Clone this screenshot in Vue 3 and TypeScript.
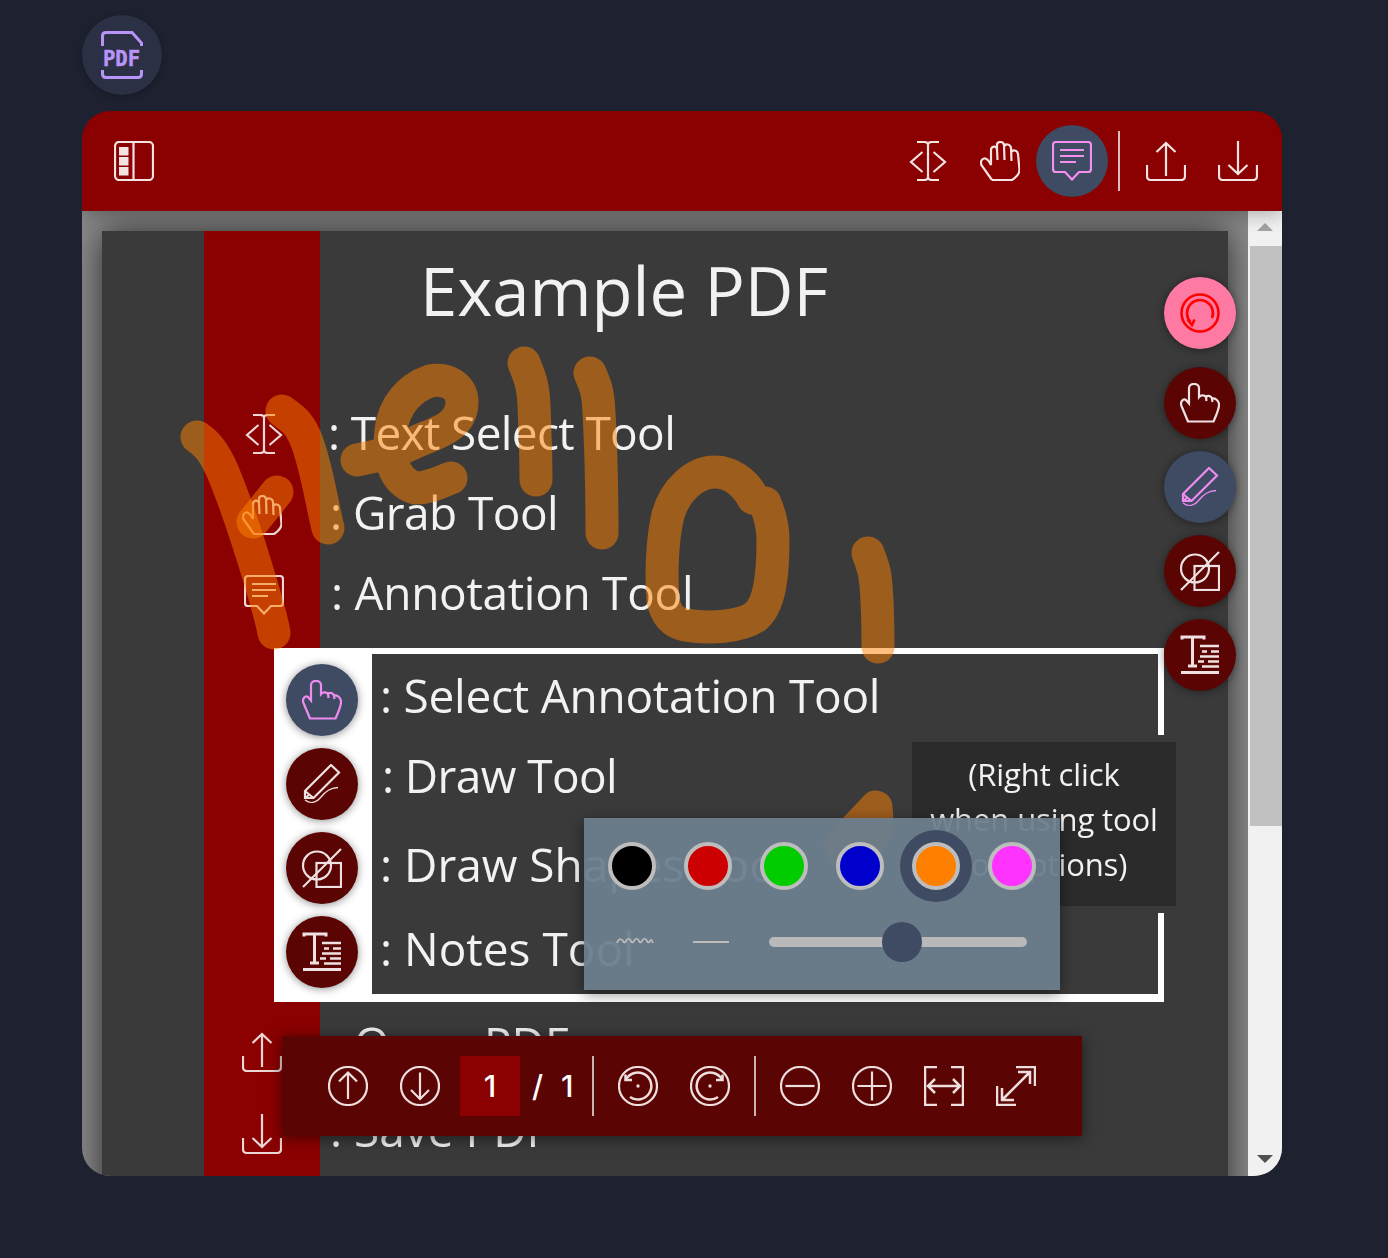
<script setup lang="ts">
interface Fab { icon: string; tone: string }

const headTools = [
  { icon: 'textsel', active: false },
  { icon: 'grab', active: false },
  { icon: 'comment', active: true },
]
const fabs: Fab[] = [
  { icon: 'reset', tone: 'pink' },
  { icon: 'pointer', tone: 'dark' },
  { icon: 'pencil', tone: 'slate' },
  { icon: 'shapes', tone: 'dark' },
  { icon: 'notes', tone: 'dark' },
]
const legend: Fab[] = [
  { icon: 'pointer', tone: 'slate' },
  { icon: 'pencil', tone: 'dark' },
  { icon: 'shapes', tone: 'dark' },
  { icon: 'notes', tone: 'dark' },
]
const boxRows = [
  { text: ': Select Annotation Tool', cls: 'b1' },
  { text: ': Draw Tool', cls: 'b2' },
  { text: ': Draw Shapes Tool', cls: 'b3' },
  { text: ': Notes Tool', cls: 'b4' },
]
const swatches = ['#000000', '#cc0000', '#00cc00', '#0000cc', '#ff8000', '#ff33ff']
const selected = 4
const strokes = [
  'M197 437C206 443 213 450 222 470C234 498 250 547 260 580C267 604 272 620 274 633',
  'M282 411C292 418 298 422 305 437C316 462 322 505 328 528',
  'M277 492L253 522',
  'M357 460C380 456 400 450 420 440C440 432 462 425 462 402C462 385 445 378 430 381C410 388 394 405 391 430C388 455 392 480 415 488C430 488 440 482 451 478',
  'M524 363C530 378 533 385 534 405C535 430 536 460 536 480',
  'M590 373C596 387 598 392 599 412C601 450 602 500 602 533',
  'M753 498C745 482 730 472 715 472C695 472 675 490 668 515C662 540 661 575 663 600C666 615 672 622 685 625C710 629 740 627 755 617C770 605 773 575 773 540C773 525 770 515 765 503',
  'M868 553C872 565 875 568 876 585C878 610 878 630 878 647',
  'M876 807L840 845C845 858 850 858 862 848C878 835 878 825 876 807Z',
]
</script>

<template>
  <div class="app">
    <svg class="sprite" aria-hidden="true">
      <symbol id="panel" viewBox="0 0 40 40">
        <rect x="1" y="1" width="38" height="38" rx="4" />
        <path d="M19.500 1V39" />
        <path d="M5 6h9.500v8.500H5zM5 16h9.500v8.500H5zM5 26h9.500v8.500H5z" fill="currentColor" stroke="none" />
      </symbol>
      <symbol id="textsel" viewBox="0 0 40 40">
        <path d="M9 1H16C18 1 20 2 20 4V36C20 38 18 39 16 39H9M31 1H24C22 1 20 2 20 4M20 36C20 38 22 39 24 39H31" />
        <path d="M14.500 11L3 21L14.500 31M25.500 11L37 21L25.500 31" />
      </symbol>
      <symbol id="grab" viewBox="0 0 40 40">
        <path d="M12 39L2 25C0 22 1 18 4 17.500C7 17 9 20 11 24V9C11 5 16.500 4 17 8.500L17.500 19M17 8V4C17 0 23.500 0 24 4L24.500 19M24 6C25 2 30.500 3 31 7L31.500 20M31 12C32 8 37.500 9 38 13L39.500 29C39.500 33 35 37 32 39H12" />
      </symbol>
      <symbol id="comment" viewBox="0 0 40 40">
        <path d="M4 1H36Q39 1 39 4V28Q39 31 36 31H27L20 38.500L13 31H4Q1 31 1 28V4Q1 1 4 1Z" />
        <path d="M8 9H32M8 15H32M8 21H24" />
      </symbol>
      <symbol id="upload" viewBox="0 0 40 40">
        <path d="M1 24V35Q1 39 5 39H35Q39 39 39 35V24" />
        <path d="M20 35V2M10.500 11L20 2L29.500 11" />
      </symbol>
      <symbol id="download" viewBox="0 0 40 40">
        <path d="M1 24V35Q1 39 5 39H35Q39 39 39 35V24" />
        <path d="M20 0V33M10.500 24L20 33L29.500 24" />
      </symbol>
      <symbol id="reset" viewBox="0 0 40 40">
        <circle cx="20" cy="20" r="18.500" stroke-width="2.600" />
        <path d="M10.500 29A13 13 0 1 1 32 25" stroke-width="2.600" />
        <path d="M7.500 26.500L12 32L14.500 26.500" stroke-width="2.600" />
      </symbol>
      <symbol id="pointer" viewBox="0 0 40 40">
        <path d="M8 38.500L1.500 23C0 19 3 15 6 17L9 20.500V5C9 -.5 19 -.5 19 5V14C21 11.500 24.500 12 26 14C28 12 31 13 32 15.500C35 15 38.500 17 39 21C39.500 25 36 33 33.500 38.500Z" />
        <path d="M26 14L26.500 18M32 15.500L32.500 19" />
      </symbol>
      <symbol id="pencil" viewBox="0 0 40 40">
        <path d="M3 34V27L29 1L37 8.500L11.500 34Z" />
        <path d="M3 27L11.500 34M3 34L7.500 30.500" />
        <path d="M3 36C8 40 14 39 19 33C24 27 28 24 36 23.500" stroke-width="1.300" />
      </symbol>
      <symbol id="shapes" viewBox="0 0 40 40">
        <circle cx="15" cy="17.500" r="14" />
        <rect x="14.500" y="15" width="24.500" height="24" />
        <path d="M1 39L39 1" />
      </symbol>
      <symbol id="notes" viewBox="0 0 40 40">
        <path d="M2 4.500V2H24V4.500M12.500 2V30M8 31H17" stroke-width="3" />
        <path d="M1 37.500H39" stroke-width="2.800" />
        <path d="M20 11H39M22 16.500H27M31 16.500H39M20 21.500H39M18 26.500H24M28 26.500H39M22 31.500H39" stroke-width="2.600" />
      </symbol>
      <symbol id="up" viewBox="0 0 40 40">
        <circle cx="20" cy="20" r="19" />
        <path d="M20 33V6.500M11 15.500L20 6.500L29 15.500" />
      </symbol>
      <symbol id="down" viewBox="0 0 40 40">
        <circle cx="20" cy="20" r="19" />
        <path d="M20 6.500V33M11 24L20 33L29 24" />
      </symbol>
      <symbol id="ccw" viewBox="0 0 40 40">
        <circle cx="20" cy="20" r="19" />
        <path d="M8 13.500A13.500 13.500 0 1 1 12 31" stroke-width="2.500" />
        <path d="M7.500 8.500L7.500 14L14 14" stroke-width="2.500" />
        <circle cx="20" cy="20" r="1.700" fill="currentColor" stroke="none" />
      </symbol>
      <symbol id="cw" viewBox="0 0 40 40">
        <circle cx="20" cy="20" r="19" />
        <path d="M32 13.500A13.500 13.500 0 1 0 28 31" stroke-width="2.500" />
        <path d="M32.500 8.500L32.500 14L26 14" stroke-width="2.500" />
        <circle cx="20" cy="20" r="1.700" fill="currentColor" stroke="none" />
      </symbol>
      <symbol id="minus" viewBox="0 0 40 40">
        <circle cx="20" cy="20" r="19" />
        <path d="M5.500 20H34.500" />
      </symbol>
      <symbol id="plus" viewBox="0 0 40 40">
        <circle cx="20" cy="20" r="19" />
        <path d="M5.500 20H34.500M20 5.500V34.500" />
      </symbol>
      <symbol id="fit" viewBox="0 0 40 40">
        <path d="M13 1H1V39H13M27 1H39V39H27" stroke-width="2.500" />
        <path d="M4 20H36M11 13L4 20L11 27M29 13L36 20L29 27" stroke-width="2.500" />
      </symbol>
      <symbol id="expand" viewBox="0 0 40 40">
        <path d="M20 1H39V20M1 20V39H20" stroke-width="2.500" />
        <path d="M6 34L34 6M22 6H34V18M6 22V34H18" stroke-width="2.500" />
      </symbol>
      <symbol id="thin" viewBox="0 0 40 40">
        <path d="M2 21C3 17 6 16 8 19C9 21 10 21 11 19C12 16 15 16 16 19C17 21 18 21 19 19C20 16 23 16 24 19C25 21 26 21 27 19C28 16 31 16 32 19C33 21 34 21 35 19C36 17 37 18 38 21" stroke-width="1.700" />
      </symbol>
      <symbol id="thick" viewBox="0 0 40 40">
        <path d="M2 20H38" stroke-width="2" />
      </symbol>
    </svg>

    <button class="logo" type="button" aria-label="PDF">
      <svg class="logo-icon" viewBox="0 0 42 48">
        <path class="logo-line" d="M1.500 15V5Q1.500 1.500 5 1.500H31L40.500 12V15M1.500 39V43Q1.500 46.500 5 46.500H37Q40.500 46.500 40.500 43V39" />
        <text class="logo-text" x="20.500" y="34.500" text-anchor="middle">PDF</text>
      </svg>
    </button>

    <section class="card">
      <header class="topbar">
        <button class="tool" type="button"><svg class="ic"><use href="#panel" /></svg></button>
        <div class="topbar-right">
          <button v-for="t in headTools" :key="t.icon" class="tool" :class="{ active: t.active }" type="button">
            <svg class="ic"><use :href="'#' + t.icon" /></svg>
          </button>
          <span class="top-divider"></span>
          <button class="tool" type="button"><svg class="ic"><use href="#upload" /></svg></button>
          <button class="tool" type="button"><svg class="ic"><use href="#download" /></svg></button>
        </div>
      </header>

      <div class="viewer">
        <div class="scroll">
          <article class="page">
            <div class="strip">
              <svg class="ic soft i1"><use href="#textsel" /></svg>
              <svg class="ic soft i2"><use href="#grab" /></svg>
              <svg class="ic soft i3"><use href="#comment" /></svg>
              <svg class="ic soft i4"><use href="#upload" /></svg>
              <svg class="ic soft i5"><use href="#download" /></svg>
            </div>
            <div class="body">
              <h1 class="title">Example PDF</h1>
              <p class="line l1">: Text Select Tool</p>
              <p class="line l2">: Grab Tool</p>
              <p class="line l3">: Annotation Tool</p>
              <div class="legend">
                <div class="legend-btns">
                  <span v-for="(f, i) in legend" :key="i" class="fab" :class="f.tone">
                    <svg class="ic"><use :href="'#' + f.icon" /></svg>
                  </span>
                </div>
                <div class="legend-rows">
                  <p v-for="r in boxRows" :key="r.cls" class="line" :class="r.cls">{{ r.text }}</p>
                </div>
              </div>
              <p class="line l4">: Open PDF</p>
              <p class="line l5">: Save PDF</p>
            </div>
            <div class="hint">(Right click<br />when using tool<br />for options)</div>
            <svg class="ink" viewBox="102 231 1126 1000">
              <path v-for="(d, i) in strokes" :key="i" :d="d" />
            </svg>
          </article>
        </div>

        <div class="scrollbar">
          <span class="arrow-up"></span>
          <span class="thumb"></span>
          <span class="arrow-down"></span>
        </div>

        <div class="fabs">
          <button v-for="f in fabs" :key="f.icon" class="fab" :class="f.tone" type="button">
            <svg class="ic"><use :href="'#' + f.icon" /></svg>
          </button>
        </div>

        <div class="popup">
          <div class="swatches">
            <span v-for="(c, i) in swatches" :key="c" class="swatch-wrap" :class="{ on: i === selected }">
              <span class="swatch" :style="{ background: c }"></span>
            </span>
          </div>
          <div class="size-row">
            <svg class="ic"><use href="#thin" /></svg>
            <svg class="ic"><use href="#thick" /></svg>
            <div class="track"><span class="knob"></span></div>
          </div>
        </div>

        <nav class="pager">
          <svg class="ic"><use href="#up" /></svg>
          <svg class="ic"><use href="#down" /></svg>
          <span class="page-no">1</span>
          <span class="sep">/</span>
          <span class="total">1</span>
          <span class="pager-div first"></span>
          <svg class="ic"><use href="#ccw" /></svg>
          <svg class="ic"><use href="#cw" /></svg>
          <span class="pager-div"></span>
          <svg class="ic"><use href="#minus" /></svg>
          <svg class="ic"><use href="#plus" /></svg>
          <svg class="ic"><use href="#fit" /></svg>
          <svg class="ic"><use href="#expand" /></svg>
        </nav>
      </div>
    </section>
  </div>
</template>

<style>
body {
  margin: 0;
  background: #1e2130;
}
</style>

<style scoped>
.app {
  height: 1258px;
  box-sizing: border-box;
  padding: 15px 106px 0 82px;
  font-family: "Open Sans", "Liberation Sans", sans-serif;
  overflow: hidden;
}
.sprite {
  position: absolute;
  width: 0;
  height: 0;
}
button {
  border: 0;
  padding: 0;
  background: none;
  color: inherit;
  font: inherit;
}
.ic {
  display: block;
  flex: none;
  width: 40px;
  height: 40px;
  fill: none;
  stroke: currentColor;
  stroke-width: 2.2;
}
.logo {
  display: flex;
  align-items: center;
  justify-content: center;
  width: 80px;
  height: 80px;
  border-radius: 50%;
  background: #2c3044;
  box-shadow: 0 2px 6px rgba(0, 0, 0, 0.25);
}
.logo-icon {
  width: 42px;
  height: 48px;
}
.logo-line {
  fill: none;
  stroke: #b794f6;
  stroke-width: 3;
}
.logo-text {
  fill: #b794f6;
  stroke: #b794f6;
  stroke-width: 0.5;
  font-family: "DejaVu Sans Mono", monospace;
  font-size: 20.500px;
  font-weight: 700;
}
.card {
  display: flex;
  flex-direction: column;
  width: 1200px;
  height: 1065px;
  margin-top: 16px;
  border-radius: 28px;
  overflow: hidden;
}
.topbar {
  position: relative;
  z-index: 1;
  flex: none;
  display: flex;
  align-items: center;
  justify-content: space-between;
  height: 100px;
  padding: 0 8px 0 16px;
  background: #8b0000;
  color: #f3e3e3;
  box-shadow: 0 3px 18px rgba(0, 0, 0, 0.3);
}
.topbar-right {
  display: flex;
  align-items: center;
}
.tool {
  display: flex;
  align-items: center;
  justify-content: center;
  width: 72px;
  height: 72px;
  border-radius: 50%;
}
.tool.active {
  background: #3f4a63;
  color: #f48fef;
}
.top-divider {
  width: 2px;
  height: 60px;
  margin: 0 10px;
  background: #dcbcbc;
}
.viewer {
  position: relative;
  flex: 1;
  min-height: 0;
  display: flex;
  background: #8c8c8c;
}
.scroll {
  flex: 1;
  min-width: 0;
  padding: 20px;
  overflow: hidden;
}
.page {
  position: relative;
  display: flex;
  height: 1000px;
  padding-left: 102px;
  background: #3a3a3a;
  box-shadow: 0 0 34px rgba(0, 0, 0, 0.7);
  color: #f2f2f2;
}
.strip {
  flex: none;
  display: flex;
  flex-direction: column;
  width: 116px;
  padding-left: 40px;
  box-sizing: border-box;
  background: #8b0000;
  filter: blur(0.4px);
}
.soft {
  color: #ecd6d6;
}
.i1 { margin-top: 183px; }
.i2 { margin: 41px 0 0 -2px; }
.i3 { margin-top: 40px; }
.i4 { margin: 417px 0 0 -2px; }
.i5 { margin: 42px 0 0 -2px; }
.body {
  flex: 1;
  min-width: 0;
  position: relative;
  filter: blur(0.5px);
}
.title {
  margin: 0;
  padding: 21px 0 0 100px;
  font-size: 67px;
  line-height: 76px;
  font-weight: 400;
}
.line {
  margin: 0;
  font-size: 46px;
  line-height: 60px;
  white-space: nowrap;
}
.l1 { margin-top: 74px; padding-left: 8px; letter-spacing: -0.65px; }
.l2 { margin-top: 20px; padding-left: 10px; letter-spacing: -0.55px; }
.l3 { margin-top: 20px; padding-left: 11px; letter-spacing: -0.3px; }
.legend {
  display: flex;
  width: 890px;
  height: 354px;
  margin: 26px 0 0 -46px;
  box-sizing: border-box;
  border: solid #ffffff;
  border-width: 6px 6px 8px 0;
  background: #fff;
}
.legend-btns {
  flex: none;
  display: flex;
  flex-direction: column;
  gap: 12px;
  width: 98px;
  box-sizing: border-box;
  padding: 10px 0 0 12px;
}
.legend-rows {
  flex: 1;
  background: #3a3a3a;
}
.b1 { margin-top: 11px; padding-left: 8px; letter-spacing: -0.25px; }
.b2 { margin-top: 20px; padding-left: 10px; letter-spacing: -0.6px; }
.b3 { margin-top: 29px; padding-left: 8px; }
.b4 { margin-top: 24px; padding-left: 8px; }
.l4 { margin-top: 11px; padding-left: 10px; }
.l5 { margin-top: 26px; padding-left: 10px; }
.hint {
  position: absolute;
  left: 810px;
  top: 511px;
  width: 264px;
  height: 164px;
  padding-top: 10px;
  box-sizing: border-box;
  background: #2b2b2b;
  box-shadow: 0 0 0 7px #3a3a3a;
  text-align: center;
  font-size: 31px;
  line-height: 45px;
  letter-spacing: -0.1px;
  filter: blur(0.5px);
}
.ink {
  position: absolute;
  left: 0;
  top: 0;
  width: 1126px;
  height: 1000px;
  fill: none;
  stroke: #ff8000;
  stroke-opacity: 0.5;
  stroke-width: 33;
  stroke-linecap: round;
  stroke-linejoin: round;
  pointer-events: none;
}
.scrollbar {
  position: relative;
  flex: none;
  width: 34px;
  box-sizing: border-box;
  display: flex;
  flex-direction: column;
  align-items: center;
  background: #f1f1f1;
}
.arrow-up {
  width: 0;
  height: 0;
  margin-top: 12px;
  border: 8px solid transparent;
  border-top: 0;
  border-bottom: 8px solid #a3a3a3;
}
.thumb {
  width: 32px;
  height: 580px;
  margin-top: 15px;
  margin-left: 2px;
  background: #c1c1c1;
}
.arrow-down {
  width: 0;
  height: 0;
  margin-top: auto;
  margin-bottom: 13px;
  border: 8px solid transparent;
  border-bottom: 0;
  border-top: 8px solid #505050;
}
.fabs {
  position: absolute;
  right: 46px;
  top: 66px;
  display: flex;
  flex-direction: column;
  gap: 12px;
}
.fabs .fab:first-child {
  margin-bottom: 6px;
}
.fab {
  display: flex;
  align-items: center;
  justify-content: center;
  width: 72px;
  height: 72px;
  border-radius: 50%;
  box-shadow: 0 1px 8px rgba(0, 0, 0, 0.45);
  color: #efe1e1;
}
.fab.pink {
  background: #ff7aa2;
  color: #ff0000;
}
.fab.dark {
  background: #5a0404;
}
.fab.slate {
  background: #3f4a63;
  color: #ee8cf0;
}
.popup {
  position: absolute;
  left: 502px;
  top: 607px;
  width: 476px;
  height: 172px;
  box-sizing: border-box;
  padding: 12px;
  background: rgba(108, 125, 141, 0.95);
  box-shadow: 0 4px 14px rgba(0, 0, 0, 0.45);
}
.swatches {
  display: flex;
  gap: 4px;
}
.swatch-wrap {
  display: flex;
  align-items: center;
  justify-content: center;
  width: 72px;
  height: 72px;
  border-radius: 50%;
}
.swatch-wrap.on {
  background: #3f4a63;
}
.swatch {
  width: 48px;
  height: 48px;
  box-sizing: border-box;
  border: 4px solid #bdbdbd;
  border-radius: 50%;
}
.size-row {
  display: flex;
  align-items: center;
  margin: 20px 0 0 19px;
  color: #bdbdbd;
}
.size-row .ic + .ic {
  margin: 0 38px 0 36px;
}
.track {
  position: relative;
  width: 258px;
  height: 10px;
  border-radius: 5px;
  background: #b9b9b9;
}
.knob {
  position: absolute;
  left: 113px;
  top: -15px;
  width: 40px;
  height: 40px;
  border-radius: 50%;
  background: #3f4a63;
}
.pager {
  position: absolute;
  left: 200px;
  bottom: 40px;
  display: flex;
  align-items: center;
  width: 800px;
  height: 100px;
  box-sizing: border-box;
  padding-left: 46px;
  gap: 32px;
  background: #5a0404;
  box-shadow: 0 2px 14px rgba(0, 0, 0, 0.5);
  color: #efdede;
  font-family: "Inter", "Liberation Sans", sans-serif;
  font-size: 30px;
  font-weight: 500;
}
.page-no {
  width: 60px;
  height: 60px;
  margin-left: -12px;
  background: #8b0000;
  color: #fff;
  text-align: center;
  line-height: 60px;
}
.sep {
  margin-left: -20px;
  color: #fff;
}
.total {
  margin-left: -14px;
  color: #fff;
}
.pager-div {
  width: 2px;
  height: 60px;
  margin: 0 -8px;
  background: #c9b3b3;
}
.pager-div.first {
  margin-left: -14px;
}
</style>
